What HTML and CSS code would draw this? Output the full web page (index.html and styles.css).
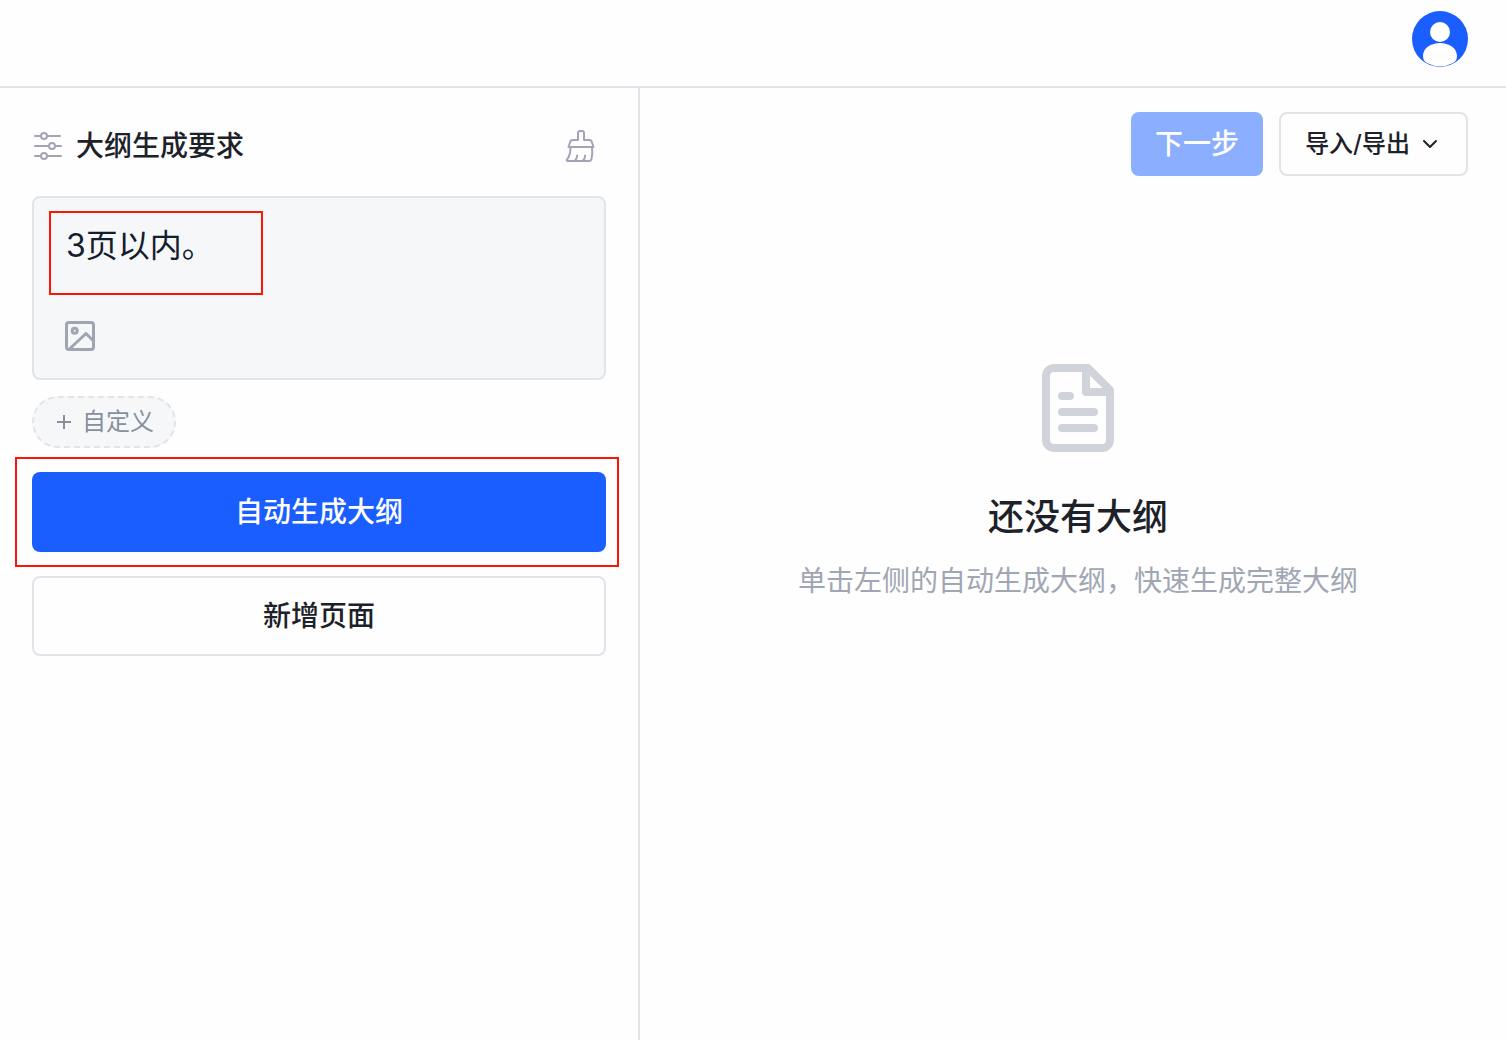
FILE: index.html
```html
<!DOCTYPE html>
<html lang="zh-CN">

<head>
    <meta charset="UTF-8">
    <meta name="viewport" content="width=device-width, initial-scale=1.0">
    <title>大纲生成</title>
    <link rel="stylesheet" href="styles.css">
</head>

<body>

    <header class="topbar">
        <a class="avatar" href="#" aria-label="个人中心">
            <svg viewBox="0 0 56 56" width="56" height="56">
                <circle cx="28" cy="28" r="28" fill="#1a5eff" />
                <circle cx="28" cy="21" r="10" fill="#fff" />
                <path d="M11 45c0-8 8-13 17-13s17 5 17 13c0 4-2 6-4 7a28 28 0 0 1-26 0c-2-1-4-3-4-7z" fill="#fff" />
            </svg>
        </a>
    </header>

    <main class="layout">

        <!-- Panneau gauche : demande -->
        <section class="side">

            <div class="side-head">
                <svg class="icon-sliders" viewBox="0 0 32 32" width="32" height="32">
                    <path d="M3 6h6M15 6h13M3 16h14M23 16h6M3 26h6M15 26h14" />
                    <circle cx="12" cy="6" r="3" />
                    <circle cx="20" cy="16" r="3" />
                    <circle cx="12" cy="26" r="3" />
                </svg>
                <h1>大纲生成要求</h1>
                <button class="clear" type="button" aria-label="清空">
                    <svg viewBox="0 0 32 32" width="32" height="32">
                        <path d="M14 10V3a2 2 0 0 1 2-2h2a2 2 0 0 1 2 2v7h5a3 3 0 0 1 3 2.500l1.500 4.500H4.500l1.500-4.500A3 3 0 0 1 9 10z" />
                        <path d="M6.500 17.500C6.500 23 5 27 3 29.500q-1 1.500 1 1.500h21q2 0 2.500-2c1-4 1-8 .5-11.500M11 30.500q2-2 2.200-5M19 30.500q2-2 2.200-5" />
                    </svg>
                </button>
            </div>

            <div class="prompt">
                <textarea id="prompt" rows="1" aria-label="大纲生成要求">3页以内。</textarea>
                <button class="picture" type="button" aria-label="上传图片">
                    <svg viewBox="0 0 32 32" width="32" height="32">
                        <rect x="2.500" y="2.500" width="27" height="27" rx="2.500" />
                        <circle cx="10.700" cy="10.700" r="2.500" />
                        <path d="M6 28.500L22 13.500L29 20.500" />
                    </svg>
                </button>
                <span class="mark mark-prompt"></span>
            </div>

            <button class="custom" type="button">
                <svg viewBox="0 0 16 16" width="16" height="16">
                    <path d="M8 1v14M1 8h14" />
                </svg>
                自定义
            </button>

            <div class="generate">
                <button class="btn btn-primary" type="button">自动生成大纲</button>
                <span class="mark mark-generate"></span>
            </div>
            <button class="btn btn-plain" type="button">新增页面</button>

        </section>

        <!-- Panneau droit : plan -->
        <section class="outline">

            <div class="actions">
                <button class="action action-next" type="button" disabled>下一步</button>
                <button class="action action-export" type="button">
                    导入/导出
                    <svg viewBox="0 0 16 16" width="16" height="16">
                        <path d="M2 5l6 6l6-6" />
                    </svg>
                </button>
            </div>

            <div class="empty">
                <svg viewBox="0 0 72 88" width="72" height="88">
                    <path d="M12 4h34l22 22v50a8 8 0 0 1-8 8H12a8 8 0 0 1-8-8V12a8 8 0 0 1 8-8z" />
                    <path d="M44 5v23h24M20 32h8M20 48h32M20 64h32" />
                </svg>
                <h2>还没有大纲</h2>
                <p>单击左侧的自动生成大纲，快速生成完整大纲</p>
            </div>

        </section>

    </main>

</body>

</html>
```

FILE: styles.css
```css
* { box-sizing: border-box; }

body
{
    margin: 0;
    min-height: 100vh;
    display: flex;
    flex-direction: column;
    background-color: #fefefe;
    color: #1d2129;
    font-family: Inter, "Noto Sans CJK SC", sans-serif;
}

h1, h2, p { margin: 0; }
svg { display: block; flex: none; fill: none; stroke-linecap: round; stroke-linejoin: round; }
button { font-family: inherit; color: inherit; padding: 0; line-height: 40px; cursor: pointer; }

/* Barre du haut */
.topbar
{
    display: flex;
    justify-content: flex-end;
    height: 88px;
    padding: 11px 38px 0;
    border-bottom: 2px solid #e3e3ea;
}
.avatar { height: 56px; }

.layout { flex: 1; display: flex; }

/* Panneau gauche */
.side
{
    flex: none;
    width: 640px;
    padding: 32px;
    border-right: 2px solid #e3e3ea;
}

.side-head
{
    display: flex;
    align-items: center;
    gap: 12px;
    height: 52px;
    margin-bottom: 24px;
    padding-right: 10px;
}
.side-head h1 { flex: 1; font-size: 28px; line-height: 42px; font-weight: 500; }
.icon-sliders { stroke: #a5a3b8; stroke-width: 2; }

.clear, .picture { border: none; background: none; }
.clear svg { stroke: #a5a3b8; stroke-width: 2; }

.prompt
{
    position: relative;
    height: 184px;
    padding: 24px 30px;
    border: 2px solid #e3e4e9;
    border-radius: 8px;
    background-color: #f6f7f9;
}
.prompt textarea
{
    display: block;
    width: 100%;
    height: 48px;
    margin-bottom: 50px;
    padding: 0 2px;
    border: none;
    outline: none;
    resize: none;
    overflow: hidden;
    background: none;
    color: #141c2e;
    font-family: inherit;
    font-size: 32px;
    line-height: 48px;
}
.picture { display: block; }
.picture svg { stroke: #9fa5b1; stroke-width: 3; stroke-linecap: butt; }

.custom
{
    display: flex;
    align-items: center;
    gap: 10px;
    height: 52px;
    margin: 16px 0 24px;
    padding: 0 20px 0 22px;
    border: 2px dashed #e3e4ea;
    border-radius: 26px;
    background-color: #f6f7f9;
    color: #86909c;
    font-size: 24px;
}
.custom svg { stroke: #86909c; stroke-width: 2; stroke-linecap: butt; }

.btn
{
    display: block;
    width: 100%;
    height: 80px;
    border-radius: 8px;
    font-size: 28px;
    font-weight: 500;
}
.btn-primary { border: none; background-color: #1a5eff; color: #fff; }
.btn-plain { border: 2px solid #e3e3ea; background-color: #fefefe; }

.generate { position: relative; margin-bottom: 24px; }

/* Cadres rouges */
.mark { position: absolute; border: 2px solid #fa1505; pointer-events: none; }
.mark-prompt { left: 15px; top: 13px; width: 214px; height: 84px; }
.mark-generate { left: -17px; right: -13px; top: -15px; bottom: -15px; }

/* Panneau droit */
.outline { flex: 1; padding: 24px 38px 24px 48px; }

.actions { display: flex; justify-content: flex-end; gap: 16px; }
.action { height: 64px; border-radius: 8px; font-weight: 500; }
.action-next
{
    padding: 0 24px;
    border: none;
    background-color: #8caeff;
    color: #fff;
    font-size: 28px;
}
.action-export
{
    display: flex;
    align-items: center;
    gap: 12px;
    padding: 0 28px 0 24px;
    border: 2px solid #e3e3ea;
    background-color: #fefefe;
    font-size: 24px;
}
.action-export svg { stroke: #1d2129; stroke-width: 2; }

.empty
{
    display: flex;
    flex-direction: column;
    align-items: center;
    padding-top: 188px;
    text-align: center;
}
.empty svg { stroke: #d0d4da; stroke-width: 8; }
.empty h2 { margin-top: 40px; font-size: 36px; line-height: 50px; font-weight: 500; }
.empty p { margin-top: 19px; color: #a0a6b4; font-size: 28px; line-height: 40px; }
```
